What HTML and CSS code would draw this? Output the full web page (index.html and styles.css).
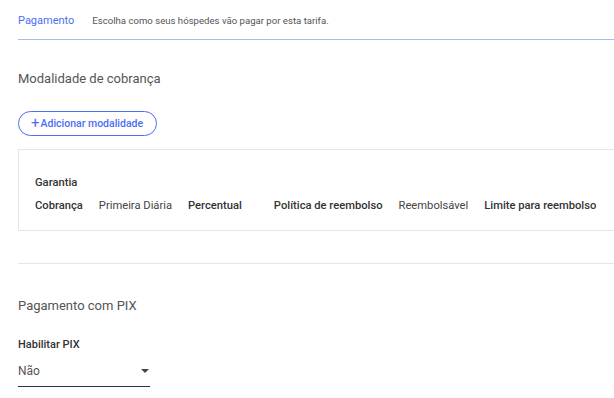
FILE: index.html
```html
<!DOCTYPE html>
<html lang="pt-BR">
<head>
  <meta charset="UTF-8" />
  <meta name="viewport" content="width=device-width, initial-scale=1.0"/>
  <title>Tarifa | Pagamento</title>
  <link rel="stylesheet" href="styles.css">
</head>
<body>
  <div class="page">
    <!-- Cabeçalho da aba -->
    <div class="tab-header">
      <span class="tab-title">Pagamento</span>
      <span class="tab-desc">Escolha como seus hóspedes vão pagar por esta tarifa.</span>
    </div>

    <h2 class="section-title">Modalidade de cobrança</h2>
    <button class="btn-outline" type="button"><span class="plus">+</span>Adicionar modalidade</button>

    <div class="card">
      <p class="card-title">Garantia</p>
      <div class="card-row">
        <span class="label">Cobrança</span>
        <span class="value">Primeira Diária</span>
        <span class="label">Percentual</span>
        <span class="value"></span>
        <span class="label">Política de reembolso</span>
        <span class="value">Reembolsável</span>
        <span class="label">Limite para reembolso</span>
        <span class="value"></span>
      </div>
    </div>

    <hr class="divider">

    <h2 class="section-title pix">Pagamento com PIX</h2>
    <label class="field-label" for="pix">Habilitar PIX</label>
    <div class="select">
      <span class="select-value" id="pix">Não</span>
      <span class="select-arrow"></span>
    </div>
  </div>
</body>
</html>
```

FILE: styles.css
```css
* {
  box-sizing: border-box;
  margin: 0;
  padding: 0;
  font-family: Roboto, 'Liberation Sans', sans-serif;
}
body {
  background: #fff;
  color: #333;
  overflow: hidden;
}
.page {
  padding-left: 18px;
  width: 700px;
}
.tab-header {
  display: flex;
  align-items: baseline;
  gap: 18px;
  height: 40px;
  padding-top: 14px;
  border-bottom: 1px solid #a9baf3;
}
.tab-title {
  font-size: 11px;
  line-height: 14px;
  color: #4c6ef5;
}
.tab-desc {
  font-size: 9.6px;
  line-height: 14px;
  color: #555;
}
.section-title {
  margin-top: 31px;
  font-size: 13px;
  line-height: 16px;
  font-weight: 400;
  color: #555;
}
.btn-outline {
  display: flex;
  align-items: center;
  margin-top: 24px;
  height: 25px;
  width: 139px;
  padding: 0 12px;
  border: 1px solid #4c6ef5;
  border-radius: 13px;
  background: #fff;
  color: #4c6ef5;
  font-size: 10.5px;
  font-weight: 500;
  cursor: pointer;
}
.plus {
  font-size: 15px;
  font-weight: 400;
  line-height: 1;
  margin-right: 1px;
}
.card {
  margin-top: 13px;
  padding: 26px 16px 17px;
  border: 1px solid #e6e6e6;
}
.card-title {
  font-size: 11.2px;
  line-height: 14px;
  font-weight: 500;
  color: #333;
}
.card-row {
  display: flex;
  gap: 16px;
  margin-top: 9px;
  font-size: 11.2px;
  line-height: 14px;
  white-space: nowrap;
}
.label {
  font-weight: 500;
  color: #333;
}
.value {
  color: #444;
}
.divider {
  margin-top: 32px;
  border: none;
  border-top: 1px solid #e6e6e6;
}
.section-title.pix {
  margin-top: 34px;
}
.field-label {
  display: block;
  margin-top: 24px;
  font-size: 11px;
  line-height: 14px;
  font-weight: 500;
  color: #333;
}
.select {
  position: relative;
  width: 132px;
  margin-top: 12px;
  padding-bottom: 8px;
  border-bottom: 1px solid #333;
}
.select-value {
  display: block;
  font-size: 12px;
  line-height: 14px;
  color: #555;
}
.select-arrow {
  position: absolute;
  right: 1px;
  top: 5px;
  border-left: 4px solid transparent;
  border-right: 4px solid transparent;
  border-top: 4px solid #444;
}
```
